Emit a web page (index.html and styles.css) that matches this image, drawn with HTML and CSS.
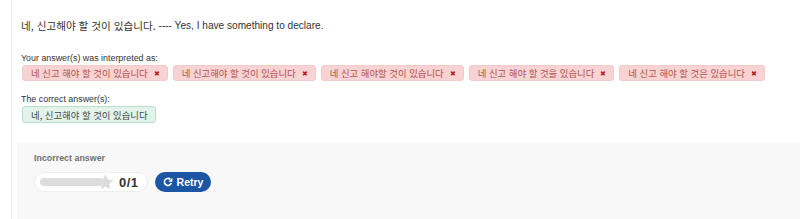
FILE: index.html
```html
<!DOCTYPE html>
<html lang="ko">
<head>
<meta charset="utf-8">
<title>Answer</title>
<link rel="stylesheet" href="styles.css">
</head>
<body>
<div class="wrap">
  <div class="question">
    <p class="sentence"><span class="ko">네, 신고해야 할 것이 있습니다.</span> ---- Yes, I have something to declare.</p>
    <div class="label">Your answer(s) was interpreted as:</div>
    <div class="tags">
      <span class="tag wrong">네 신고 해야 할 것이 있습니다<span class="x">✖</span></span>
      <span class="tag wrong">네 신고해야 할 것이 있습니다<span class="x">✖</span></span>
      <span class="tag wrong">네 신고 해야할 것이 있습니다<span class="x">✖</span></span>
      <span class="tag wrong">네 신고 해야 할 것을 있습니다<span class="x">✖</span></span>
      <span class="tag wrong">네 신고 해야 할 것은 있습니다<span class="x">✖</span></span>
    </div>
    <div class="label label2">The correct answer(s):</div>
    <div class="tags">
      <span class="tag right">네, 신고해야 할 것이 있습니다</span>
    </div>
  </div>
  <div class="panel">
    <div class="status">Incorrect answer</div>
    <div class="actions">
      <div class="score">
        <div class="bar"></div>
        <svg class="star" width="17" height="16" viewBox="0 0 24 23"><path d="M12 0.8l3.4 7.1 7.8 1-5.7 5.4 1.4 7.7L12 18.3l-6.9 3.7 1.4-7.7L0.8 8.9l7.8-1z" fill="#dcdcdc"/></svg>
        <span class="num">0/1</span>
      </div>
      <button class="retry"><svg class="ricon" width="10" height="10" viewBox="0 0 16 16"><path d="M13.2 9.6A5.6 5.6 0 1 1 11.9 4" fill="none" stroke="#fff" stroke-width="2.6"/><path d="M15 1.2V7.6H8.6z" fill="#fff"/></svg>Retry</button>
    </div>
  </div>
</div>
</body>
</html>
```
FILE: styles.css
```css
html, body {
  margin: 0;
  padding: 0;
  background: #fff;
}
body {
  font-family: "Liberation Sans", Arial, "Noto Sans CJK KR", sans-serif;
  color: #333;
}
.wrap {
  margin-left: 11px;
  border-left: 1px solid #eeeeee;
  min-height: 219px;
  box-sizing: border-box;
  padding-left: 5px;
}
.question {
  padding: 17px 0 0 4px;
}
.sentence {
  margin: 0;
  height: 16px;
  display: flex;
  align-items: center;
  white-space: pre;
  font-size: 10.1px;
  color: #333;
}
.ko {
  font-family: "Noto Sans CJK KR", sans-serif;
  font-size: 10.6px;
}
.label {
  margin-top: 19px;
  height: 13px;
  font-size: 8.9px;
  line-height: 13px;
  color: #333;
}
.label2 {
  margin-top: 12px;
}
.tags {
  display: flex;
  flex-wrap: wrap;
  gap: 5px;
  margin-left: 1px;
}
.tag {
  display: inline-flex;
  align-items: center;
  height: 16px;
  box-sizing: border-box;
  padding: 0 7px 0 8px;
  border-radius: 3px;
  font-size: 9.4px;
  line-height: 14px;
  font-family: "Noto Sans CJK KR", sans-serif;
}
.wrong {
  background: #f8d3d3;
  border: 1px solid #f5caca;
  color: #b3514f;
}
.x {
  margin-left: 6px;
  font-size: 7px;
  color: #b4201d;
}
.right {
  height: 17px;
  background: #e3f3ec;
  border: 1px solid #b9dfcd;
  color: #3d4a44;
  padding: 0 7px 0 8px;
}
.panel {
  margin-top: 20px;
  background: #f8f8f8;
  padding: 9px 17px 20px;
  min-height: 76px;
  box-sizing: border-box;
}
.status {
  font-size: 8.9px;
  line-height: 12px;
  font-weight: bold;
  color: #707070;
}
.actions {
  display: flex;
  align-items: center;
  gap: 7px;
  margin-top: 8px;
}
.score {
  display: flex;
  align-items: center;
  width: 114px;
  height: 20px;
  box-sizing: border-box;
  background: #fff;
  border: 1px solid #eeeeee;
  border-radius: 10px;
  padding-left: 5px;
}
.bar {
  width: 64px;
  height: 8px;
  background: #dddddd;
  border-radius: 4px;
}
.star {
  margin-left: -7px;
}
.num {
  margin-left: 5px;
  font-size: 13px;
  font-weight: bold;
  color: #333;
  letter-spacing: 0.5px;
}
.retry {
  display: inline-flex;
  align-items: center;
  gap: 4px;
  height: 20px;
  width: 56px;
  justify-content: center;
  border: 0;
  border-radius: 10px;
  background: #1b55a3;
  color: #fff;
  font-family: "Liberation Sans", Arial, sans-serif;
  font-size: 10.5px;
  font-weight: bold;
  padding: 0;
}
.ricon {
  display: block;
}
```
